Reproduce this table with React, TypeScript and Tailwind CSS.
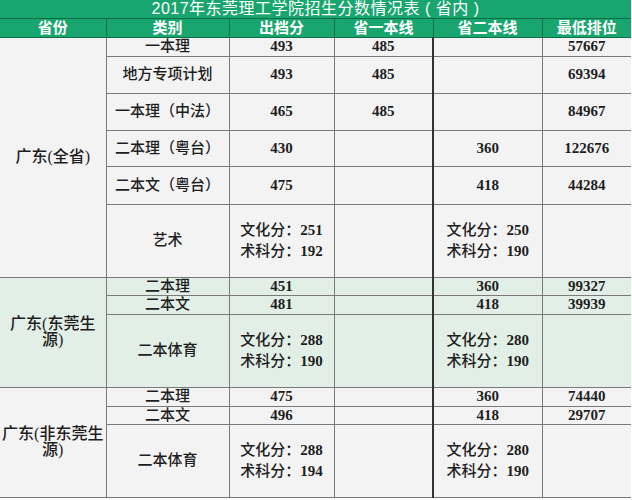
import React from 'react';

type Row = {
  cat: string;
  out: string | [string, string];
  first: string;
  second: string | [string, string];
  rank: string;
  h: string;
};

const sections: { province: React.ReactNode; bg: string; rows: Row[] }[] = [
  {
    province: '广东(全省)',
    bg: 'bg-[#f4f3f3]',
    rows: [
      { cat: '一本理', out: '493', first: '485', second: '', rank: '57667', h: 'h-[19px]' },
      { cat: '地方专项计划', out: '493', first: '485', second: '', rank: '69394', h: 'h-[37px]' },
      { cat: '一本理（中法）', out: '465', first: '485', second: '', rank: '84967', h: 'h-[37px]' },
      { cat: '二本理（粤台）', out: '430', first: '', second: '360', rank: '122676', h: 'h-[36px]' },
      { cat: '二本文（粤台）', out: '475', first: '', second: '418', rank: '44284', h: 'h-[38px]' },
      { cat: '艺术', out: ['251', '192'], first: '', second: ['250', '190'], rank: '', h: 'h-[73px]' },
    ],
  },
  {
    province: (
      <>
        广东(东莞生
        <br />
        源)
      </>
    ),
    bg: 'bg-[#e2efe6]',
    rows: [
      { cat: '二本理', out: '451', first: '', second: '360', rank: '99327', h: 'h-[18px]' },
      { cat: '二本文', out: '481', first: '', second: '418', rank: '39939', h: 'h-[19px]' },
      { cat: '二本体育', out: ['288', '190'], first: '', second: ['280', '190'], rank: '', h: 'h-[73px]' },
    ],
  },
  {
    province: (
      <>
        广东(非东莞生
        <br />
        源)
      </>
    ),
    bg: 'bg-[#f4f3f3]',
    rows: [
      { cat: '二本理', out: '475', first: '', second: '360', rank: '74440', h: 'h-[19px]' },
      { cat: '二本文', out: '496', first: '', second: '418', rank: '29707', h: 'h-[18px]' },
      { cat: '二本体育', out: ['288', '194'], first: '', second: ['280', '190'], rank: '', h: 'h-[73px]' },
    ],
  },
];

const cell = 'border border-[#7a7a7a] p-0 text-center align-middle leading-none';

function Score({ v }: { v: string | [string, string] }) {
  if (typeof v === 'string') return <span className="font-bold">{v}</span>;
  return (
    <div className="inline-flex flex-col items-start gap-[6px] text-left">
      <span>
        文化分：<span className="font-bold">{v[0]}</span>
      </span>
      <span>
        术科分：<span className="font-bold">{v[1]}</span>
      </span>
    </div>
  );
}

export default function App() {
  return (
    <div className="w-[632px] h-[500px] bg-white overflow-hidden">
      <table
        className="w-[631px] table-fixed border-collapse text-[15px] text-[#1e1e1e]"
        style={{ fontFamily: '"Liberation Serif", "Noto Sans CJK SC", serif' }}
      >
        <colgroup>
          <col className="w-[106px]" />
          <col className="w-[123px]" />
          <col className="w-[105px]" />
          <col className="w-[99px]" />
          <col className="w-[109px]" />
          <col className="w-[89px]" />
        </colgroup>
        <thead className="text-white" style={{ fontFamily: '"Liberation Sans", "Noto Sans CJK SC", sans-serif' }}>
          <tr className="h-[18px] bg-[#18a66e]">
            <th colSpan={6} className="p-0 text-center text-[16px] font-normal leading-none border-b border-[#0e6e45] tracking-[0.5px]">
              2017年东莞理工学院招生分数情况表 ( 省内 )
            </th>
          </tr>
          <tr className="h-[19px] bg-[#18a66e] text-[15px] font-bold">
            {['省份', '类别', '出档分', '省一本线', '省二本线', '最低排位'].map((t, i) => (
              <th
                key={t}
                className={`p-0 leading-none border-b border-[#0e6e45] ${i > 0 ? 'border-l border-[#0e6e45]' : ''}`}
              >
                {t}
              </th>
            ))}
          </tr>
        </thead>
        <tbody>
          {sections.map((s, si) =>
            s.rows.map((r, ri) => (
              <tr key={`${si}-${ri}`} className={`${r.h} ${s.bg}`}>
                {ri === 0 && (
                  <td rowSpan={s.rows.length} className={`${cell} border-l-0 text-[16px] font-medium leading-[18px]`}>
                    {s.province}
                  </td>
                )}
                <td className={`${cell} font-medium`}>{r.cat}</td>
                <td className={`${cell} font-medium`}>
                  <Score v={r.out} />
                </td>
                <td className={`${cell} border-r-2 border-r-[#333]`}>
                  <span className="font-bold">{r.first}</span>
                </td>
                <td className={`${cell} font-medium`}>
                  <Score v={r.second} />
                </td>
                <td className={`${cell} border-r-0`}>
                  <span className="font-bold">{r.rank}</span>
                </td>
              </tr>
            ))
          )}
        </tbody>
      </table>
    </div>
  );
}
